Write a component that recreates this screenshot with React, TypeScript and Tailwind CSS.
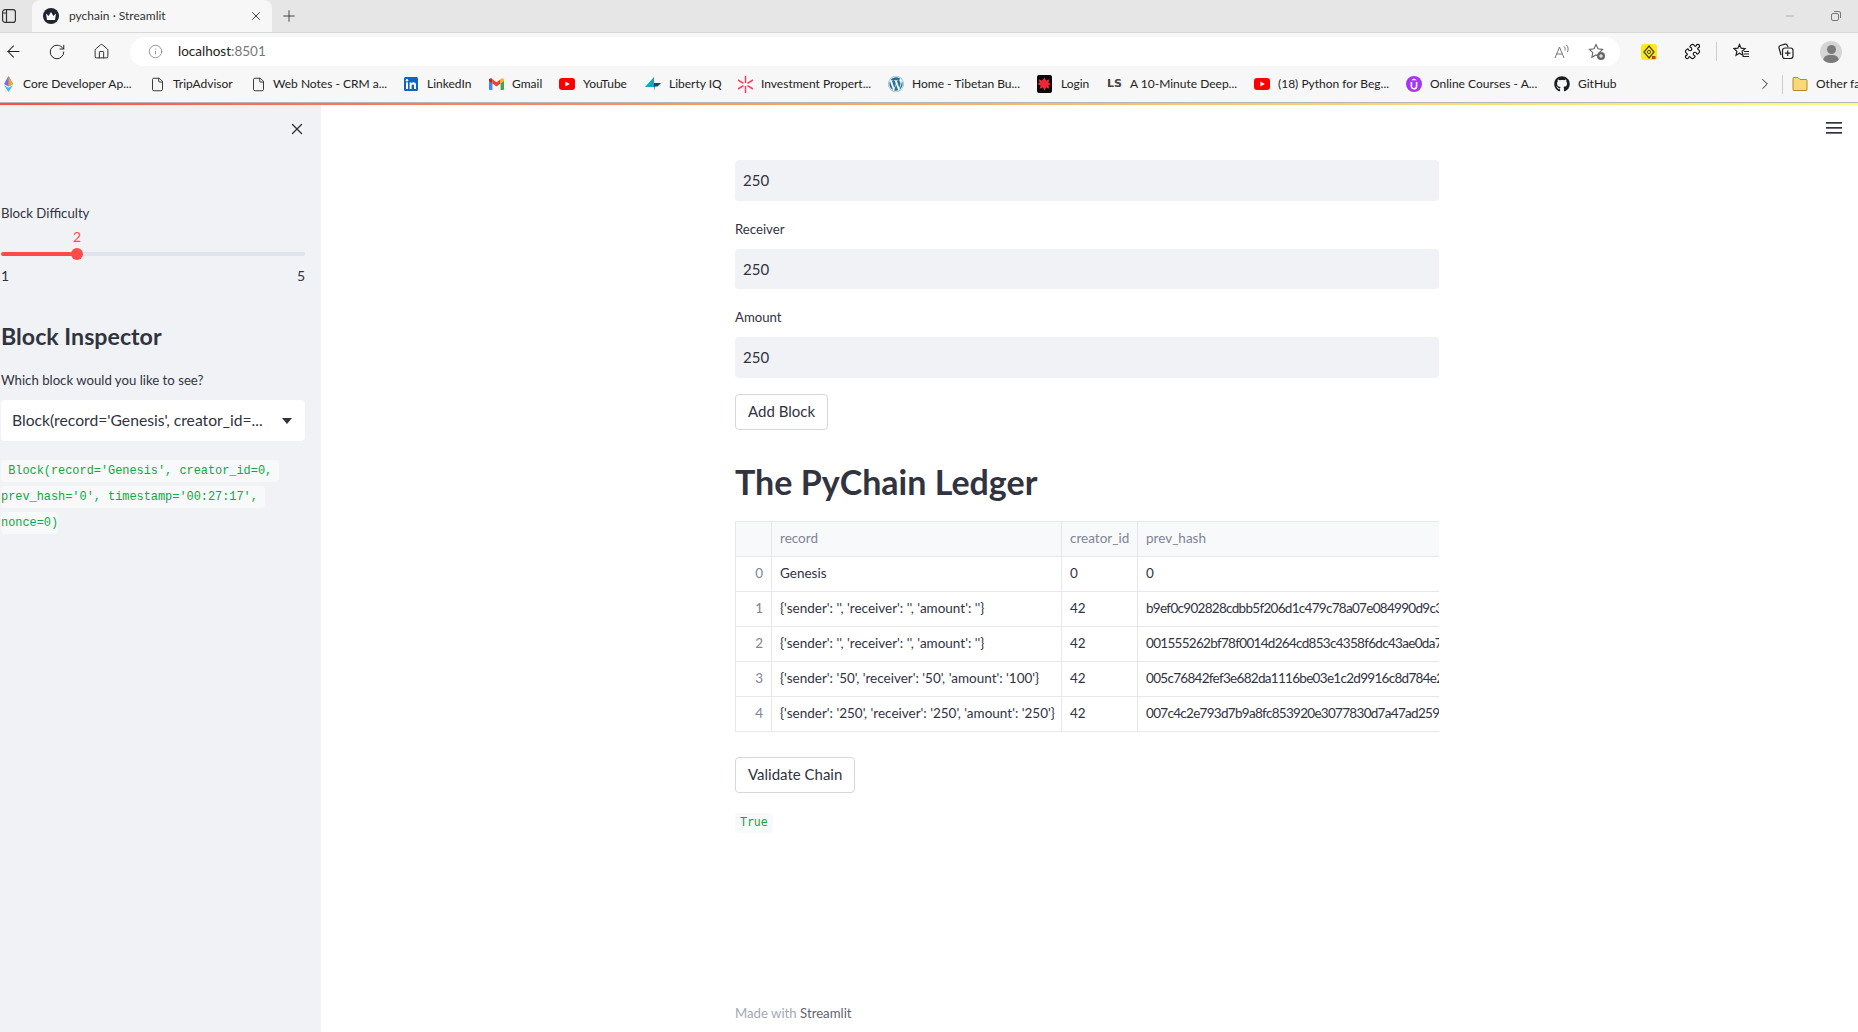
import * as React from 'react';
import { ArrowLeft, ChevronRight, File, House, Info, Minus, Plus, Puzzle, RotateCw, X } from 'lucide-react';
import { FaGithub, FaWordpress } from 'react-icons/fa';

const YouTubeIcon = () => (
  <svg width="16" height="12" viewBox="0 0 16 12">
    <rect width="16" height="12" rx="3" fill="#f00" />
    <path d="M6.4 3.4 10.8 6l-4.4 2.6z" fill="#fff" />
  </svg>
);

const GmailIcon = () => (
  <svg width="15" height="12" viewBox="0 0 15 12">
    <path d="M0 2v9a1 1 0 0 0 1 1h2.4V5.4z" fill="#4285f4" />
    <path d="M15 2v9a1 1 0 0 1-1 1h-2.4V5.4z" fill="#34a853" />
    <path d="M3.4 5.4 7.5 8.4l4.1-3V1.2L7.5 4.3 3.4 1.2z" fill="#ea4335" />
    <path d="M0 2c0-1.6 1.9-2.5 3.4-.8v4.2L0 3z" fill="#c5221f" />
    <path d="M15 2c0-1.6-1.9-2.5-3.4-.8v4.2L15 3z" fill="#fbbc04" />
  </svg>
);

const bookmarks: { icon: React.ReactNode; label: string; box: string; text: string }[] = [
  {
    icon: (
      <svg width="9" height="16" viewBox="0 0 9 16">
        <path d="M4.5 0 9 8 4.5 10.5 0 8z" fill="#7b68ee" />
        <path d="M4.5 0 9 8 4.5 10.5z" fill="#f5a623" />
        <path d="M0 9.2 4.5 16 9 9.2 4.5 11.8z" fill="#38bdf8" />
      </svg>
    ),
    label: 'Core Developer Ap...',
    box: 'w-[19px]',
    text: 'w-[127px]',
  },
  { icon: <File size={15} strokeWidth={1.4} color="#222" />, label: 'TripAdvisor', box: 'w-[23px]', text: 'w-[78px]' },
  { icon: <File size={15} strokeWidth={1.4} color="#222" />, label: 'Web Notes - CRM a...', box: 'w-[22px]', text: 'w-[131px]' },
  {
    icon: (
      <svg width="14" height="14" viewBox="0 0 14 14">
        <rect width="14" height="14" rx="1.5" fill="#0a66c2" />
        <rect x="2" y="5.4" width="2" height="6.6" fill="#fff" />
        <circle cx="3" cy="3.2" r="1.2" fill="#fff" />
        <path d="M5.6 5.4h2v1c.8-1.5 4.4-1.8 4.4 1.6V12h-2V8.6c0-1.6-2.4-1.5-2.4 0V12h-2z" fill="#fff" />
      </svg>
    ),
    label: 'LinkedIn',
    box: 'w-[23px]',
    text: 'w-[62px]',
  },
  { icon: <GmailIcon />, label: 'Gmail', box: 'w-[23px]', text: 'w-[47px]' },
  { icon: <YouTubeIcon />, label: 'YouTube', box: 'w-[24px]', text: 'w-[62px]' },
  {
    icon: (
      <svg width="16" height="14" viewBox="0 0 16 14">
        <path d="M9 0v10H0z" fill="#12a5c4" />
        <path d="M9 6h7l-3.5 3.6H9.8L9 14z" fill="#1d3f72" />
      </svg>
    ),
    label: 'Liberty IQ',
    box: 'w-[24px]',
    text: 'w-[69px]',
  },
  {
    icon: (
      <svg width="15" height="17" viewBox="0 0 15 17" stroke="#e8455f" strokeWidth="1.5">
        <path d="M7.5 0v7M7.5 10v7M0 4l5.5 3.4M9.5 9.6 15 13M15 4 9.5 7.4M5.5 9.6 0 13" />
      </svg>
    ),
    label: 'Investment Propert...',
    box: 'w-[23px]',
    text: 'w-[127px]',
  },
  { icon: <FaWordpress size={16} color="#21759b" />, label: 'Home - Tibetan Bu...', box: 'w-[24px]', text: 'w-[125px]' },
  {
    icon: (
      <svg width="15" height="18" viewBox="0 0 15 18">
        <rect width="15" height="18" rx="2" fill="#0a0a0a" />
        <path d="m7.5 2.5 1.6 3 3.2-1.2-.8 3.4 2.3 1.3-2.3 1.4.8 3.3-3.2-1.1-1.6 3-1.6-3-3.2 1.1.8-3.3L.2 9l2.3-1.3-.8-3.4 3.2 1.2z" fill="#ee2737" />
      </svg>
    ),
    label: 'Login',
    box: 'w-[24px]',
    text: 'w-[46px]',
  },
  {
    icon: <span className="font-['DejaVu_Sans'] text-[11px] font-bold text-[#444]">LS</span>,
    label: 'A 10-Minute Deep...',
    box: 'w-[23px]',
    text: 'w-[124px]',
  },
  { icon: <YouTubeIcon />, label: '(18) Python for Beg...', box: 'w-[24px]', text: 'w-[128px]' },
  {
    icon: (
      <svg width="16" height="18" viewBox="0 0 16 18">
        <circle cx="8" cy="9" r="8" fill="#a435f0" />
        <path d="M5.4 7v4.2a2.6 2.6 0 0 0 5.2 0V7" fill="none" stroke="#fff" strokeWidth="1.6" />
        <path d="M8 3.4 11 5.2H5z" fill="#fff" />
      </svg>
    ),
    label: 'Online Courses - A...',
    box: 'w-[24px]',
    text: 'w-[124px]',
  },
  { icon: <FaGithub size={16} color="#1b1f23" />, label: 'GitHub', box: 'w-[24px]', text: 'w-[162px]' },
];

const rows = [
  { id: 0, record: 'Genesis', creator: '0', hash: '0' },
  { id: 1, record: "{'sender': '', 'receiver': '', 'amount': ''}", creator: '42', hash: 'b9ef0c902828cdbb5f206d1c479c78a07e084990d9c3a1f2' },
  { id: 2, record: "{'sender': '', 'receiver': '', 'amount': ''}", creator: '42', hash: '001555262bf78f0014d264cd853c4358f6dc43ae0da7b9e1' },
  { id: 3, record: "{'sender': '50', 'receiver': '50', 'amount': '100'}", creator: '42', hash: '005c76842fef3e682da1116be03e1c2d9916c8d784e2a0c4' },
  { id: 4, record: "{'sender': '250', 'receiver': '250', 'amount': '250'}", creator: '42', hash: '007c4c2e793d7b9a8fc853920e3077830d7a47ad2596f1e3' },
];

const cell = 'border-r border-b border-[#e6e8ee] px-[8px] text-left font-normal whitespace-nowrap overflow-hidden';

const Field = ({ label }: { label?: string }) => (
  <div className="flex flex-col">
    {label && <label className="h-[20px] mb-[10px] mt-[18px] text-[13.2px] leading-[20px]">{label}</label>}
    <input
      readOnly
      value="250"
      className="h-[40.5px] w-full rounded-[4px] bg-[#f0f2f6] px-[8px] text-[15px] text-[#31333f] outline-none"
    />
  </div>
);

const OutlineButton = ({ children }: { children: React.ReactNode }) => (
  <button className="block h-[36px] w-fit rounded-[4px] border border-[#d5d7de] bg-white px-[12px] text-[15px] text-[#31333f]">
    {children}
  </button>
);

const App: React.FunctionComponent = () => {
  return (
    <div className="flex h-[1032px] w-[1858px] flex-col overflow-hidden bg-white font-['Lato',sans-serif] text-[#31333f]">
      {/* tab strip */}
      <div className="flex h-[32px] shrink-0 items-center bg-[#e6e6e6] pl-[2px] text-[#333]">
        <svg width="14" height="14" viewBox="0 0 14 14" fill="none" stroke="#333" strokeWidth="1.2" className="mr-[16px]">
          <rect x="0.6" y="0.6" width="12.8" height="12.8" rx="2.5" />
          <path d="M4.5 1v12M1 4h3.5" />
        </svg>
        <div className="flex h-full w-[240px] items-center rounded-t-[8px] bg-[#f7f7f7] pl-[11px] pr-[9px]">
          <span className="flex h-[16px] w-[16px] items-center justify-center rounded-full bg-[#1f2430]">
            <svg width="10" height="8" viewBox="0 0 10 8"><path d="M0 1.5 2.6 4 5 0l2.4 4L10 1.5 9 8H1z" fill="#fff" /></svg>
          </span>
          <span className="ml-[10px] text-[12px] text-[#333]">pychain · Streamlit</span>
          <X size={14} strokeWidth={1.6} className="ml-auto" />
        </div>
        <Plus size={18} strokeWidth={1.2} className="ml-[8px]" />
        <Minus size={12} strokeWidth={1} className="ml-auto text-[#777]" />
        <svg width="10" height="10" viewBox="0 0 10 10" fill="none" stroke="#777" className="ml-[35px] mr-[17px]">
          <rect x="0.5" y="2.5" width="7" height="7" rx="1.5" />
          <path d="M3 .5h5a1.5 1.5 0 0 1 1.5 1.5v5" />
        </svg>
      </div>

      {/* toolbar */}
      <div className="flex h-[34px] shrink-0 items-center border-t border-[#d8d8d8] bg-[#f7f7f7] pt-[4px] text-[#222]">
        <ArrowLeft size={19} strokeWidth={1.3} className="ml-[4px]" />
        <RotateCw size={18} strokeWidth={1.3} className="ml-[25px]" />
        <House size={17} strokeWidth={1.3} className="ml-[27px]" />
        <div className="ml-[20px] flex h-[30px] w-[1490px] items-center rounded-full bg-white pl-[18px] pr-[14px]">
          <Info size={15} strokeWidth={1.2} className="text-[#777]" />
          <span className="ml-[15px] text-[13.5px] text-[#222]">
            localhost<span className="text-[#777]">:8501</span>
          </span>
          <svg width="16" height="16" viewBox="0 0 16 16" fill="none" stroke="#777" strokeWidth="1" className="ml-auto">
            <path d="m1 14 4.500-11L10 14M2.800 10h5.400" />
            <path d="M10 2.500c1.200 1 1.500 2.500 1 4M12.500 1c1.800 1.800 2 4.500 1 7" />
          </svg>
          <svg width="18" height="18" viewBox="0 0 18 18" fill="none" className="ml-[18px]">
            <path d="m8 1.500 2 4.300 4.600.6-3.400 3.200.9 4.600L8 11.900l-4.100 2.300.9-4.600L1.400 6.400 6 5.800z" stroke="#666" strokeWidth="1.1" />
            <circle cx="13" cy="13" r="4" fill="#666" />
            <path d="M13 11v4M11 13h4" stroke="#fff" />
          </svg>
        </div>
        <svg width="16" height="16" viewBox="0 0 16 16" className="ml-[21px]">
          <rect width="16" height="16" rx="3" fill="#ffe81a" />
          <path d="m8 2 5 6-5 6-5-6z" fill="none" stroke="#4a4a20" strokeWidth="1.3" />
          <circle cx="8" cy="8" r="1.6" fill="none" stroke="#4a4a20" />
          <rect x="11" y="12" width="3.500" height="3" fill="#c2410c" />
        </svg>
        <Puzzle size={17} strokeWidth={1.6} color="#111" className="ml-[27px]" />
        <div className="ml-[15px] h-[19px] w-px bg-[#ccc]" />
        <svg width="17" height="17" viewBox="0 0 17 17" fill="none" stroke="#222" strokeWidth="1.2" className="ml-[16px]">
          <path d="m6.500 1.500 1.600 3.700 4 .4-3 2.700.9 4-3.500-2.100L3 12.300l.9-4-3-2.700 4-.4z" />
          <path d="M11 8.500h5M11 11h5M9.500 13.500h6.500" />
        </svg>
        <svg width="17" height="17" viewBox="0 0 17 17" fill="none" stroke="#222" strokeWidth="1.2" className="ml-[27px]">
          <path d="M4 12 2 5a2 2 0 0 1 1.400-2.500L8 1.200a2 2 0 0 1 2.400 1.300L11 4" />
          <rect x="5.500" y="5" width="10.500" height="10.500" rx="2.500" />
          <path d="M10.700 7.500v5.500M8 10.200h5.500" />
        </svg>
        <div className="relative ml-[26px] flex h-[22px] w-[22px] items-center justify-center overflow-hidden rounded-full bg-[#d5d5d5]">
          <span className="absolute top-[4px] h-[9px] w-[9px] rounded-full bg-[#7a7a7a]" />
          <span className="absolute top-[14px] h-[12px] w-[16px] rounded-full bg-[#7a7a7a]" />
        </div>
      </div>

      {/* bookmarks bar */}
      <div className="flex h-[36px] shrink-0 items-center overflow-hidden whitespace-nowrap bg-[#f7f7f7] pl-[4px] text-[12px] text-[#222]">
        {bookmarks.map((b) => (
          <div key={b.label} className="flex shrink-0 items-center">
            <span className={`flex items-center ${b.box}`}>{b.icon}</span>
            <span className={b.text}>{b.label}</span>
          </div>
        ))}
        <ChevronRight size={18} strokeWidth={1.3} className="ml-[16px] shrink-0" />
        <div className="ml-[8px] h-[19px] w-px shrink-0 bg-[#ccc]" />
        <svg width="16" height="14" viewBox="0 0 16 14" className="ml-[9px] shrink-0">
          <path d="M1 1.500a1 1 0 0 1 1-1h4l2 2h6a1 1 0 0 1 1 1V12.500a1 1 0 0 1-1 1H2a1 1 0 0 1-1-1z" fill="#f9d976" stroke="#b58a2a" />
        </svg>
        <span className="ml-[8px] shrink-0">Other favorites</span>
      </div>

      {/* page */}
      <div className="flex min-h-0 flex-1 flex-col border-t border-[#b5b5b5]">
        <div className="h-[2px] shrink-0 bg-gradient-to-r from-[#ff4b4b] to-[#fffd80]" />
        <div className="flex min-h-0 flex-1">
          <aside className="relative w-[321px] shrink-0 bg-[#f0f2f6] pl-[1px]">
            <button className="absolute left-[288px] top-[15px] text-[#31333f]">
              <X size={18} strokeWidth={1.8} />
            </button>
            <div className="w-[304px] pt-[98px]">
              <p className="text-[13.2px] leading-[20px]">Block Difficulty</p>
              <div className="relative mt-[29px] h-[4px] rounded-full bg-[#dfe3ec]">
                <div className="h-full w-[76px] rounded-full bg-[#ff4b4b]" />
                <span className="absolute left-[70px] top-[-4px] h-[12px] w-[12px] rounded-full bg-[#ff4b4b]" />
                <span className="absolute left-[72px] top-[-25px] text-[14px] leading-[20px] text-[#ff4b4b]">2</span>
              </div>
              <div className="mt-[10px] flex justify-between text-[14px] leading-[20px]">
                <span>1</span>
                <span>5</span>
              </div>
              <h2 className="mt-[34px] text-[23.2px] font-bold leading-[32px]">Block Inspector</h2>
              <p className="mt-[18px] text-[13.2px] leading-[20px]">Which block would you like to see?</p>
              <div className="mt-[10px] flex h-[41px] items-center rounded-[4px] bg-white pl-[11px] pr-[13px] text-[15.7px]">
                <span className="truncate">Block(record='Genesis', creator_id=...</span>
                <span className="ml-auto h-0 w-0 shrink-0 border-x-[5.500px] border-t-[6px] border-x-transparent border-t-[#31333f]" />
              </div>
              <p className="mt-[17px] whitespace-pre-wrap font-['DejaVu_Sans_Mono',monospace] text-[11.9px] leading-[25.2px] text-[#09ab3b]">
                <code className="rounded-[4px] bg-[#f8f9fb] py-[4px] [box-decoration-break:clone]">
                  {" Block(record='Genesis', creator_id=0, prev_hash='0', timestamp='00:27:17', nonce=0)"}
                </code>
              </p>
            </div>
          </aside>

          <main className="relative flex-1">
            <button className="absolute left-[1505px] top-[17px] text-[#31333f]" aria-label="menu">
              <svg width="16" height="12" viewBox="0 0 16 12" fill="#31333f" className="block">
                <rect width="16" height="1.700" />
                <rect y="5" width="16" height="1.700" />
                <rect y="10" width="16" height="1.700" />
              </svg>
            </button>
            <div className="ml-[414px] flex h-full w-[704px] flex-col pt-[55px]">
              <Field />
              <Field label="Receiver" />
              <Field label="Amount" />
              <div className="mt-[16px]">
                <OutlineButton>Add Block</OutlineButton>
              </div>
              <h1 className="mt-[28px] text-[34px] font-bold leading-[48px]">The PyChain Ledger</h1>
              <div className="mt-[15px] overflow-hidden border-l border-t border-[#e6e8ee]">
                <table className="w-[900px] table-fixed border-separate border-spacing-0 text-[13.500px]">
                  <colgroup>
                    <col className="w-[36px]" />
                    <col className="w-[290px]" />
                    <col className="w-[76px]" />
                    <col className="w-[498px]" />
                  </colgroup>
                  <thead>
                    <tr className="h-[35px] bg-[#f8f9fb] text-[#808495]">
                      <th className={cell} />
                      <th className={cell}>record</th>
                      <th className={cell}>creator_id</th>
                      <th className={cell}>prev_hash</th>
                    </tr>
                  </thead>
                  <tbody>
                    {rows.map((r) => (
                      <tr key={r.id} className="h-[35px]">
                        <td className={`${cell} !text-right text-[#808495]`}>{r.id}</td>
                        <td className={cell}>{r.record}</td>
                        <td className={cell}>{r.creator}</td>
                        <td className={`${cell} tracking-[-0.7px]`}>{r.hash}</td>
                      </tr>
                    ))}
                  </tbody>
                </table>
              </div>
              <div className="mt-[25px]">
                <OutlineButton>Validate Chain</OutlineButton>
              </div>
              <code className="mt-[20px] flex h-[20px] w-fit items-center rounded-[4px] bg-[#f8f9fb] px-[5px] font-['DejaVu_Sans_Mono',monospace] text-[11.500px] text-[#09ab3b]">
                True
              </code>
              <p className="mt-[171px] text-[13.200px] text-[#a3a8b4]">
                Made with <span className="text-[#62646f]">Streamlit</span>
              </p>
            </div>
          </main>
        </div>
      </div>
    </div>
  );
};

export default App;
